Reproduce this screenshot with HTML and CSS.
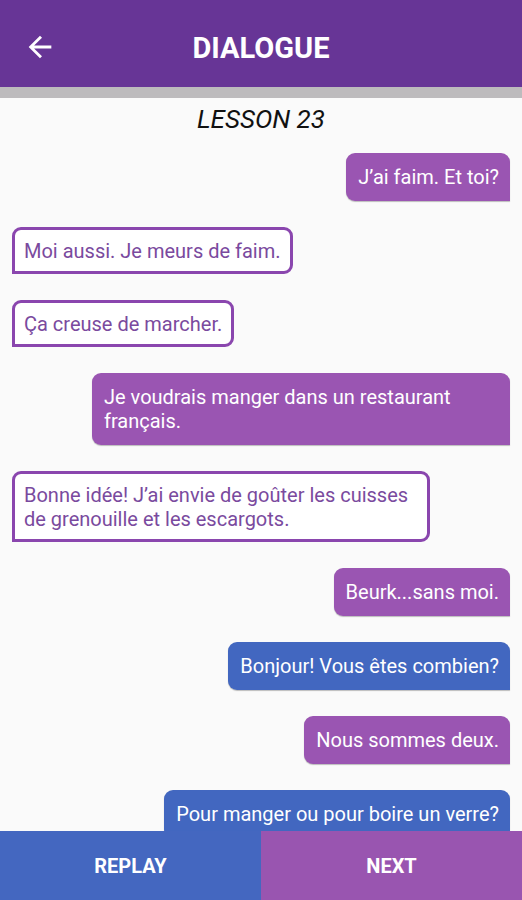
FILE: index.html
```html
<!DOCTYPE html>
<html>
<head>
<meta charset="utf-8">
<link rel="stylesheet" href="styles.css">
</head>
<body>
<div class="app">
  <header class="topbar">
    <button class="back" aria-label="Back">
      <svg width="34" height="34" viewBox="0 0 24 24"><path d="M20 11H7.83l5.59-5.59L12 4l-8 8 8 8 1.41-1.41L7.83 13H20v-2z" fill="#fff"/></svg>
    </button>
    <h1 class="title">DIALOGUE</h1>
  </header>
  <div class="divider"></div>
  <main class="chat">
    <h2 class="lesson">LESSON 23</h2>
    <div class="msg right purple">J’ai faim. Et toi?</div>
    <div class="msg left">Moi aussi. Je meurs de faim.</div>
    <div class="msg left">Ça creuse de marcher.</div>
    <div class="msg right purple">Je voudrais manger dans un restaurant français.</div>
    <div class="msg left">Bonne idée! J’ai envie de goûter les cuisses de grenouille et les escargots.</div>
    <div class="msg right purple">Beurk...sans moi.</div>
    <div class="msg right blue">Bonjour! Vous êtes combien?</div>
    <div class="msg right purple">Nous sommes deux.</div>
    <div class="msg right blue">Pour manger ou pour boire un verre?</div>
  </main>
  <footer class="actions">
    <button class="action replay">REPLAY</button>
    <button class="action next">NEXT</button>
  </footer>
</div>
</body>
</html>
```
FILE: styles.css
```css
* { box-sizing: border-box; }
html, body { margin: 0; padding: 0; }
body {
  font-family: Roboto, "Noto Sans", sans-serif;
  background: #fafafa;
  width: 522px;
  height: 900px;
  overflow: hidden;
}
.app {
  display: flex;
  flex-direction: column;
  height: 900px;
}
.topbar {
  height: 87px;
  background: #673596;
  display: flex;
  align-items: center;
  position: relative;
  flex-shrink: 0;
}
.back {
  background: none;
  border: none;
  padding: 0;
  margin-left: 23px;
  margin-top: 7px;
  width: 34px;
  height: 34px;
  display: flex;
  cursor: pointer;
}
.title {
  position: absolute;
  left: 0;
  right: 0;
  top: 28px;
  margin: 0;
  text-align: center;
  color: #fff;
  font-size: 29px;
  font-weight: 700;
  line-height: 40px;
  pointer-events: none;
}
.divider {
  height: 11px;
  background: #bdbbbd;
  flex-shrink: 0;
}
.chat {
  flex: 1;
  overflow: hidden;
  display: flex;
  flex-direction: column;
  gap: 26px;
  padding: 0 12px;
}
.lesson {
  margin: 4px 0 -9px;
  text-align: center;
  font-style: italic;
  font-weight: 400;
  font-size: 26px;
  line-height: 34px;
  color: #111;
}
.msg {
  max-width: 418px;
  font-size: 20px;
  line-height: 24px;
  padding: 12px 11px 12px 12px;
  border-radius: 9px;
  flex-shrink: 0;
}
.msg.right {
  align-self: flex-end;
  color: #fff;
  border-bottom-right-radius: 0;
  box-shadow: 0 1px 1px rgba(0,0,0,0.25);
}
.msg.purple { background: #9a55b2; }
.msg.blue { background: #4267c0; }
.msg.left {
  align-self: flex-start;
  background: #fff;
  color: #7a4a9e;
  border: 3px solid #8a46ae;
  border-bottom-left-radius: 0;
  padding: 9px 9px 8px 9px;
}
.actions {
  display: flex;
  height: 69px;
  flex-shrink: 0;
}
.action {
  border: none;
  margin: 0;
  color: #fff;
  font-family: Roboto, "Noto Sans", sans-serif;
  font-size: 20px;
  font-weight: 700;
  cursor: pointer;
}
.replay { background: #4467c0; width: 261px; }
.next { background: #9955b0; flex: 1; }
```
